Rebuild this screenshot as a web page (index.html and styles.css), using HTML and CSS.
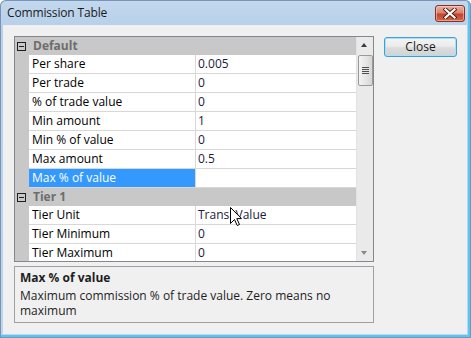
FILE: index.html
```html
<!DOCTYPE html>
<html>
<head>
<meta charset="utf-8">
<link rel="stylesheet" href="styles.css">
</head>
<body>
<div class="window">
  <div class="titlebar">
    <span class="title">Commission Table</span>
    <div class="xbtn">
      <svg width="14" height="11" viewBox="0 0 14 11">
        <path d="M2.5 1.5 L11.5 9.5 M11.5 1.5 L2.5 9.5" stroke="#5a1a10" stroke-width="4" stroke-linecap="square"/>
        <path d="M2.5 1.5 L11.5 9.5 M11.5 1.5 L2.5 9.5" stroke="#ffffff" stroke-width="2.2" stroke-linecap="square"/>
      </svg>
    </div>
  </div>
  <div class="client">
    <div class="left">
      <div class="grid">
        <div class="rows">
          <div class="cat"><span class="cat-margin"><span class="toggle"></span></span><span class="cat-label">Default</span></div>
          <div class="row"><span class="margin"></span><span class="label">Per share</span><span class="value">0.005</span></div>
          <div class="row"><span class="margin"></span><span class="label">Per trade</span><span class="value">0</span></div>
          <div class="row"><span class="margin"></span><span class="label">% of trade value</span><span class="value">0</span></div>
          <div class="row"><span class="margin"></span><span class="label">Min amount</span><span class="value">1</span></div>
          <div class="row"><span class="margin"></span><span class="label">Min % of value</span><span class="value">0</span></div>
          <div class="row"><span class="margin"></span><span class="label">Max amount</span><span class="value">0.5</span></div>
          <div class="row selected"><span class="margin"></span><span class="label">Max % of value</span><span class="value"></span></div>
          <div class="cat"><span class="cat-margin"><span class="toggle"></span></span><span class="cat-label">Tier 1</span></div>
          <div class="row"><span class="margin"></span><span class="label">Tier Unit</span><span class="value">Trans. Value</span></div>
          <div class="row"><span class="margin"></span><span class="label">Tier Minimum</span><span class="value">0</span></div>
          <div class="row"><span class="margin"></span><span class="label">Tier Maximum</span><span class="value">0</span></div>
        </div>
        <div class="scrollbar">
          <div class="arrow up"></div>
          <div class="thumb"><span class="grip"></span></div>
          <div class="track"></div>
          <div class="arrow down"></div>
        </div>
      </div>
      <div class="desc">
        <div class="desc-title">Max % of value</div>
        <div class="desc-text">Maximum commission % of trade value. Zero means no maximum</div>
      </div>
    </div>
    <div class="side">
      <div class="close-btn">Close</div>
    </div>
  </div>
  <svg class="cursor" width="13" height="20" viewBox="0 0 13 20">
    <path d="M0.5 0.5 L0.5 16.5 L4.5 12.5 L7.2 18.5 L9.5 17.5 L6.8 11.6 L11.5 11.6 Z" fill="#ffffff" stroke="#000000" stroke-width="1"/>
  </svg>
</div>
</body>
</html>
```

FILE: styles.css
```css
* { box-sizing: border-box; }
html, body {
  margin: 0;
  padding: 0;
  background: #ffffff;
}
body {
  font-family: "Open Sans", "Noto Sans", sans-serif;
  font-size: 12px;
  color: #000;
}
.window {
  position: relative;
  width: 471px;
  height: 338px;
  display: flex;
  flex-direction: column;
  background: linear-gradient(#c3d8ee, #b8d0ea 25px, #bdd5ee);
  border-radius: 6px 6px 0 0;
  box-shadow: inset 0 0 0 1px #7894b5, inset -2px -2px 0 1px #58c6ee;
  padding: 0 4px 4px 3px;
}
.titlebar {
  height: 25px;
  display: flex;
  align-items: flex-start;
  padding-left: 4px;
}
.title {
  margin-top: 5px;
  font-size: 12px;
  letter-spacing: -0.15px;
  color: #1a1a1a;
  line-height: 16px;
}
.xbtn {
  margin-left: auto;
  margin-top: 5px;
  margin-right: 2px;
  width: 30px;
  height: 17px;
  border: 1px solid #8a2f22;
  border-radius: 3px;
  background: linear-gradient(#eab1a3, #d9826d 45%, #c4442c 55%, #d2684d);
  box-shadow: inset 0 0 0 1px rgba(255,220,210,0.5);
  display: flex;
  align-items: center;
  justify-content: center;
}
.client {
  flex: 1;
  background: #f0f0f0;
  display: flex;
  gap: 10px;
  padding: 11px 10px 11px 11px;
}
.left {
  width: 360px;
  display: flex;
  flex-direction: column;
  gap: 4px;
}
.grid {
  height: 226px;
  border: 1px solid #828790;
  display: flex;
  background: #ffffff;
}
.rows {
  width: 341px;
  overflow: hidden;
}
.row {
  display: grid;
  grid-template-columns: 14px 167px 160px;
  height: 19px;
}
.cat + .row, .row:first-child {
  height: 19px;
}
.margin {
  background: #c8c8c8;
}
.label, .value {
  border-bottom: 1px solid #d8d8d8;
  line-height: 18px;
  white-space: nowrap;
  overflow: hidden;
}
.label {
  padding-left: 3px;
  border-right: 1px solid #d8d8d8;
}
.value {
  padding-left: 2px;
  color: #1b1b3a;
}
.selected .label {
  background: #3399ff;
  color: #ffffff;
}
.cat {
  display: flex;
  height: 18px;
  background: #c8c8c8;
}
.cat-margin {
  width: 14px;
  display: flex;
  align-items: center;
  padding-left: 2px;
}
.toggle {
  position: relative;
  width: 9px;
  height: 9px;
  border: 1px solid #1e1e1e;
}
.toggle::after {
  content: "";
  position: absolute;
  left: 1px;
  top: 3px;
  width: 5px;
  height: 1px;
  background: #1e1e1e;
}
.cat-label {
  padding-left: 4px;
  font-weight: bold;
  color: #6d6d6d;
  line-height: 18px;
}
.scrollbar {
  width: 17px;
  background: #eaeaea;
  border-left: 1px solid #e2e2e2;
  display: flex;
  flex-direction: column;
  align-items: center;
}
.arrow {
  height: 17px;
  width: 100%;
  position: relative;
}
.arrow::after {
  content: "";
  position: absolute;
  left: 4px;
  width: 0;
  height: 0;
  border-left: 3.5px solid transparent;
  border-right: 3.5px solid transparent;
}
.arrow.up::after {
  top: 6px;
  border-bottom: 4px solid #3c3c3c;
}
.arrow.down::after {
  top: 7px;
  border-top: 4px solid #8a8a8a;
}
.thumb {
  width: 15px;
  height: 31px;
  margin-top: 1px;
  border: 1px solid #9a9a9a;
  border-radius: 2px;
  background: linear-gradient(90deg, #f3f3f3, #e6e6e6 50%, #d6d6d6);
  display: flex;
  align-items: center;
  justify-content: center;
}
.grip {
  width: 7px;
  height: 7px;
  background: repeating-linear-gradient(#4e4e4e 0 1px, #e8e8e8 1px 2px);
}
.track {
  flex: 1;
}
.desc {
  height: 57px;
  border: 1px solid #a0a0a0;
  padding: 3px 5px;
  color: #1e1e1e;
  line-height: 15px;
}
.desc-title {
  font-weight: bold;
  margin-bottom: 3px;
}
.desc-text {
  width: 330px;
}
.side {
  width: 73px;
}
.close-btn {
  height: 20px;
  margin-top: 1px;
  border: 1px solid #3c9fd6;
  border-radius: 3px;
  background: linear-gradient(#f4f4f4, #ececec 45%, #dcdcdc 55%, #d2d2d2);
  box-shadow: inset 0 0 0 1px #a9e2f8;
  text-align: center;
  line-height: 18px;
  color: #1a1a1a;
}
.cursor {
  position: absolute;
  left: 230px;
  top: 207px;
}
```
